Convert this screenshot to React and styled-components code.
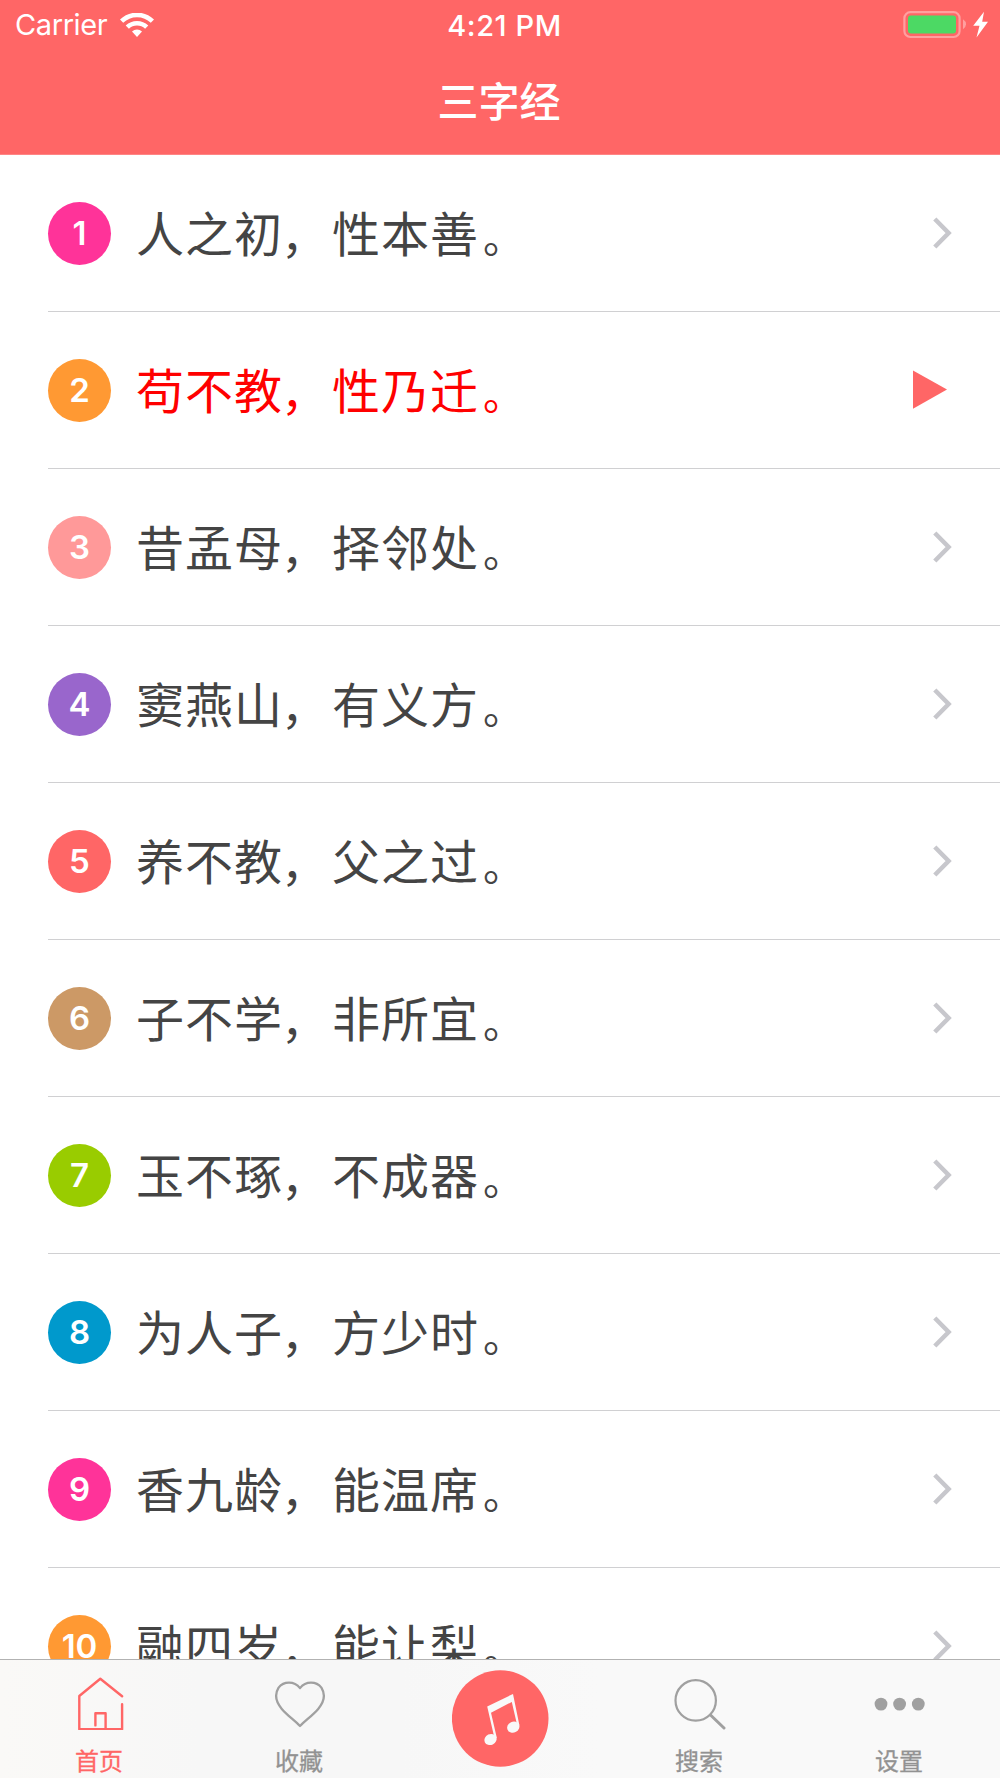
import React from 'react';
import styled, { createGlobalStyle } from 'styled-components';

const GlobalStyle = createGlobalStyle`
    * {
        box-sizing: border-box;
    }
    body {
        margin: 0;
        background: #fff;
        font-family: Inter, "Noto Sans CJK SC", sans-serif;
    }
`;

const Screen = styled.div`
    display: flex;
    flex-direction: column;
    width: 1000px;
    height: 1778px;
    overflow: hidden;
    background: #fff;
`;

const Header = styled.header`
    flex: none;
    height: 155px;
    background: #ff6666;
    border-bottom: 1px solid #ff8585;
    color: #fff;
`;

const StatusBar = styled.div`
    display: grid;
    grid-template-columns: 1fr auto 1fr;
    align-items: center;
    height: 50px;
    padding: 0 11px 0 15px;
`;

const Carrier = styled.div`
    display: flex;
    align-items: center;
    gap: 13px;
    font-size: 29px;
    line-height: 50px;
    letter-spacing: -0.4px;
`;

const Clock = styled.div`
    padding: 1px 0 0 5px;
    font-size: 29px;
    font-weight: 500;
    line-height: 49px;
    letter-spacing: 0.6px;
`;

const Battery = styled.div`
    display: flex;
    justify-content: flex-end;
`;

const Title = styled.h1`
    margin: 0;
    padding-right: 2px;
    font-size: 41px;
    font-weight: 500;
    line-height: 104px;
    text-align: center;
`;

const List = styled.ul`
    flex: 1;
    min-height: 0;
    margin: 0;
    padding: 0 0 0 48px;
    overflow: hidden;
    list-style: none;
`;

const Row = styled.li`
    display: flex;
    align-items: center;
    height: 157px;
    padding-right: 48px;
    border-bottom: 1px solid #d0d0d2;
    color: ${props => (props.$playing ? '#ff0000' : '#444')};
`;

const Badge = styled.span`
    flex: none;
    width: 63px;
    height: 63px;
    border-radius: 50%;
    background: ${props => props.$color};
    color: #fff;
    font-size: 33px;
    font-weight: 600;
    line-height: 62px;
    text-align: center;
`;

const Verse = styled.span`
    flex: 1;
    margin-left: 25px;
    padding-bottom: 5px;
    font-family: "Noto Sans CJK SC", sans-serif;
    font-size: 48px;
    letter-spacing: 1px;
    line-height: 70px;
`;

// full-width marks keep a 49px cell, $shift moves them inside it
const Mark = styled.span`
    display: inline-block;
    width: 49px;
    text-indent: ${props => props.$shift}px;
    font-size: ${props => props.$size}px;
    line-height: 1;
    vertical-align: -1px;
    white-space: nowrap;
`;

const TabBar = styled.nav`
    flex: none;
    display: grid;
    grid-template-columns: repeat(5, 1fr);
    height: 119px;
    border-top: 1px solid #b2b2b2;
    background: linear-gradient(90deg, #faf9f7 0%, #f7f7f7 20%, #f7f7f7 40%, #f9f9f9 60%);
`;

const Tab = styled.a`
    display: flex;
    flex-direction: column;
    align-items: center;
    padding-top: 10px;
    color: ${props => (props.$active ? '#ff6666' : '#929292')};
`;

const TabLabel = styled.span`
    font-family: "Noto Sans CJK SC", sans-serif;
    font-size: 24px;
    line-height: 36px;
    margin-top: 12px;
    padding-right: 2px;
    -webkit-text-stroke: 0.3px currentColor;
`;

const verses = [
    { text: '人之初，性本善。', color: '#ff3399' },
    { text: '苟不教，性乃迁。', color: '#ff9933', playing: true },
    { text: '昔孟母，择邻处。', color: '#ff9999' },
    { text: '窦燕山，有义方。', color: '#9966cc' },
    { text: '养不教，父之过。', color: '#ff6666' },
    { text: '子不学，非所宜。', color: '#cc9966' },
    { text: '玉不琢，不成器。', color: '#99cc00' },
    { text: '为人子，方少时。', color: '#0099cc' },
    { text: '香九龄，能温席。', color: '#ff3399' },
    { text: '融四岁，能让梨。', color: '#ff9933' },
];

const WifiIcon = () => (
    <svg width="34" height="25" viewBox="0 0 34 25" fill="none" stroke="#fff" strokeWidth="4.6">
        <path d="M1.6 8.2a22 22 0 0 1 30.8 0" />
        <path d="M7.3 14.2a14 14 0 0 1 19.4 0" />
        <path d="M12 18.5a7.3 7.3 0 0 1 10 0L17 23.9z" fill="#fff" stroke="none" />
    </svg>
);

const BatteryIcon = () => (
    <svg width="86" height="28" viewBox="0 0 86 28">
        <rect x="1.4" y="1.2" width="55.2" height="24.8" rx="6" fill="none" stroke="#ff9f9f" strokeWidth="2.2" />
        <rect x="5" y="4.4" width="48" height="18.2" rx="3" fill="#4cd964" />
        <path d="M60 8.2q3 2 3 5t-3 5z" fill="#ff9f9f" />
        <path d="M81 0.8 70.2 14.8h6.3l-3 11.6L85 10.8h-5.8z" fill="#fff" />
    </svg>
);

const Chevron = () => (
    <svg width="19" height="32" viewBox="0 0 19 32" fill="none" stroke="#c7c7cc" strokeWidth="4.5">
        <path d="M1.8 2 15.6 16 1.8 30" />
    </svg>
);

const PlayIcon = () => (
    <svg width="39" height="40" viewBox="0 0 39 40">
        <path d="M0 0.4v38.4L34 19.6z" fill="#ff6666" />
    </svg>
);

const HomeIcon = () => (
    <svg width="50" height="60" viewBox="0 0 50 60" fill="none" stroke="currentColor" strokeWidth="2.4" strokeLinecap="round" strokeLinejoin="round">
        <path d="M47.1 26.2 25.3 8.8 4.3 26v33.2h42.8v-25" />
        <path d="M20.4 55.4V43.3h10.2v15.6" />
    </svg>
);

const HeartIcon = () => (
    <svg width="52" height="60" viewBox="0 0 52 60" fill="none" stroke="#a0a0a0" strokeWidth="2.3" strokeLinejoin="round">
        <path d="M26 18.1C20 10.6 9.6 11.3 4.6 17.6 0 25 2 32 7.8 38.9 13 45 20 50 26 56c6-6 13-11 18.2-17.1C50 32 52 25 47.4 17.6 42.4 11.3 32 10.6 26 18.1z" />
    </svg>
);

const MusicIcon = () => (
    <svg width="97" height="97" viewBox="0 0 97 97">
        <circle cx="48.2" cy="48.5" r="48.3" fill="#ff6666" />
        <g fill="#f9f9f9">
            <path d="M35.2 36.6 61 23.9l6.4 31.3-2 1-5.6-24.3-20.8 10.9 5.8 25-2.2 1z" />
            <ellipse cx="61.3" cy="57.2" rx="6.3" ry="5.4" transform="rotate(-25 61.3 57.2)" />
            <ellipse cx="38.5" cy="69.5" rx="6.3" ry="5.4" transform="rotate(-25 38.5 69.5)" />
        </g>
    </svg>
);

const SearchIcon = () => (
    <svg width="52" height="60" viewBox="0 0 52 60" fill="none" stroke="#a0a0a0" strokeLinecap="round">
        <circle cx="21.7" cy="30.4" r="20.2" strokeWidth="2.2" />
        <path d="M36.5 45 50 58" strokeWidth="3" />
    </svg>
);

const MoreIcon = () => (
    <svg width="52" height="60" viewBox="0 0 52 60" fill="#a0a0a0">
        <circle cx="7" cy="34.1" r="6.4" />
        <circle cx="25.6" cy="34.1" r="6.4" />
        <circle cx="44.3" cy="34.1" r="6.4" />
    </svg>
);

export default function App() {
    return (
        <Screen>
            <GlobalStyle />
            <Header>
                <StatusBar>
                    <Carrier>Carrier <WifiIcon /></Carrier>
                    <Clock>4:21 PM</Clock>
                    <Battery><BatteryIcon /></Battery>
                </StatusBar>
                <Title>三字经</Title>
            </Header>

            <List>
                {verses.map((verse, index) => (
                    <Row key={index} $playing={verse.playing}>
                        <Badge $color={verse.color}>{index + 1}</Badge>
                        <Verse>
                            {verse.text.slice(0, 3)}<Mark $size={46} $shift={-2}>，</Mark>
                            {verse.text.slice(4, 7)}<Mark $size={41} $shift={4}>。</Mark>
                        </Verse>
                        {verse.playing ? <PlayIcon /> : <Chevron />}
                    </Row>
                ))}
            </List>

            <TabBar>
                <Tab $active><HomeIcon /><TabLabel>首页</TabLabel></Tab>
                <Tab><HeartIcon /><TabLabel>收藏</TabLabel></Tab>
                <Tab><MusicIcon /></Tab>
                <Tab><SearchIcon /><TabLabel>搜索</TabLabel></Tab>
                <Tab><MoreIcon /><TabLabel>设置</TabLabel></Tab>
            </TabBar>
        </Screen>
    );
}
